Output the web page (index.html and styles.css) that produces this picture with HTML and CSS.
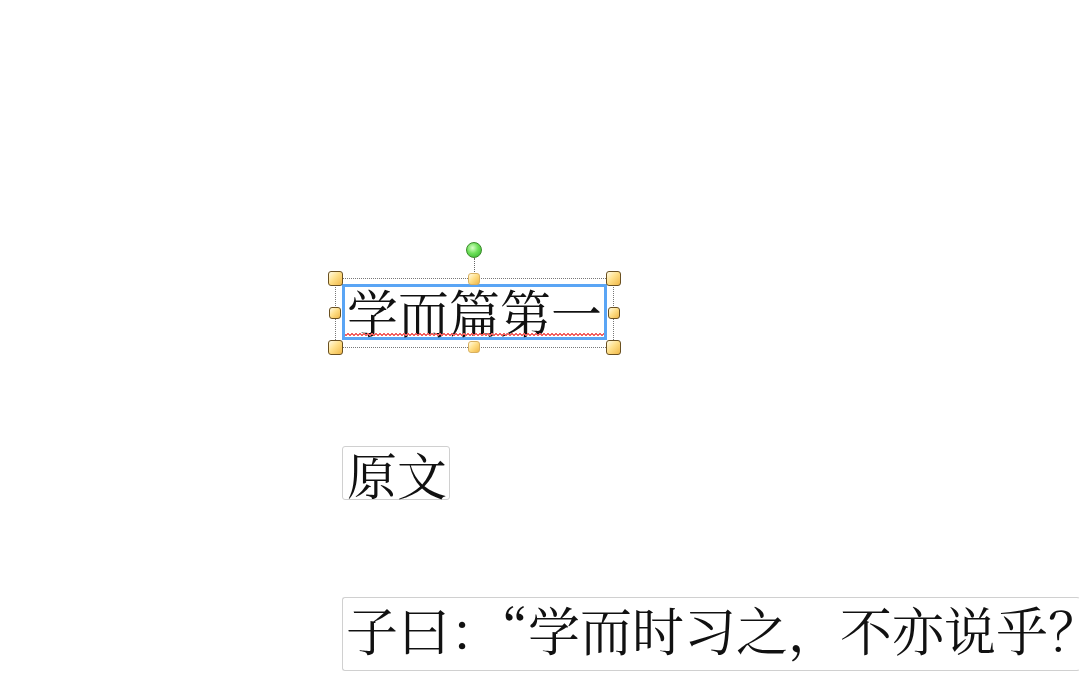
FILE: index.html
```html
<!DOCTYPE html>
<html lang="zh-CN">
<head>
    <meta charset="UTF-8">
    <title>学而篇第一</title>
    <link rel="stylesheet" href="styles.css">
</head>
<body>
    <div class="canvas">
        <div class="title-box">
            <span class="title-text">学而篇第一</span>
            <div class="frame">
                <span class="rotate-line"></span>
                <span class="rotate"></span>
                <span class="handle corner tl"></span>
                <span class="handle corner tr"></span>
                <span class="handle corner bl"></span>
                <span class="handle corner br"></span>
                <span class="handle side tm"></span>
                <span class="handle side bm"></span>
                <span class="handle side ml"></span>
                <span class="handle side mr"></span>
            </div>
        </div>
        <div class="text-box label-box">原文</div>
        <div class="text-box line-box">子曰：“学而时习之，不亦说乎？</div>
    </div>
</body>
</html>
```

FILE: styles.css
```css
html, body {
    margin: 0;
    height: 100%;
    background: #fff;
    overflow: hidden;
}
.canvas {
    display: flex;
    flex-direction: column;
    align-items: flex-start;
    padding: 284px 0 0 342px;
    font-family: "Noto Serif CJK SC", "Noto Sans CJK SC", serif;
    color: #111;
}
.title-box {
    position: relative;
    box-sizing: border-box;
    width: 265px;
    height: 56px;
    border: 3px solid #5aa5f5;
    padding-left: 2px;
    font-size: 51px;
    line-height: 48px;
    white-space: nowrap;
}
/* red squiggle under the title */
.title-box::after {
    content: "";
    position: absolute;
    left: 0;
    right: 0;
    bottom: 1px;
    height: 3px;
    background:
        linear-gradient(135deg, transparent 40%, #f26060 40%, #f26060 60%, transparent 60%) 0 0 / 4px 3px repeat-x,
        linear-gradient(45deg, transparent 40%, #f26060 40%, #f26060 60%, transparent 60%) 2px 0 / 4px 3px repeat-x;
}
.frame {
    position: absolute;
    top: -9px;
    left: -10px;
    right: -10px;
    bottom: -11px;
    border: 1px dotted #777;
}
.rotate-line {
    position: absolute;
    left: 138px;
    top: -21px;
    height: 20px;
    border-left: 1px dotted #666;
}
.rotate {
    position: absolute;
    left: 130px;
    top: -37px;
    box-sizing: border-box;
    width: 16px;
    height: 16px;
    border: 1px solid #3a8a2a;
    border-radius: 50%;
    background: radial-gradient(circle at 40% 35%, #d8ffc8 0, #6ee05a 45%, #2fae2a 100%);
}
.handle {
    position: absolute;
    box-sizing: border-box;
    border: 1px solid #6a5020;
    border-radius: 3px;
    background: linear-gradient(135deg, #fffbe6 0, #ffe08a 45%, #f0b848 100%);
}
.corner {
    width: 15px;
    height: 15px;
}
.tl { left: -8px; top: -8px; }
.tr { right: -8px; top: -8px; }
.bl { left: -8px; bottom: -8px; }
.br { right: -8px; bottom: -8px; }
.side {
    width: 12px;
    height: 12px;
}
.tm, .bm {
    border-color: #d8b060;
}
.tm { left: 132px; top: -6px; }
.bm { left: 132px; bottom: -6px; }
.ml { left: -7px; top: 28px; }
.mr { right: -7px; top: 28px; }
.text-box {
    box-sizing: border-box;
    border: 1px solid #d0d0d0;
    border-radius: 3px;
    padding: 0 2px 0 4px;
    white-space: nowrap;
}
.label-box {
    margin-top: 106px;
    height: 54px;
    font-size: 50px;
    line-height: 52px;
}
.line-box {
    margin-top: 97px;
    width: 738px;
    height: 74px;
    padding: 0 0 0 3px;
    border-right-color: #fff;
    font-size: 52px;
    line-height: 62px;
}
```
